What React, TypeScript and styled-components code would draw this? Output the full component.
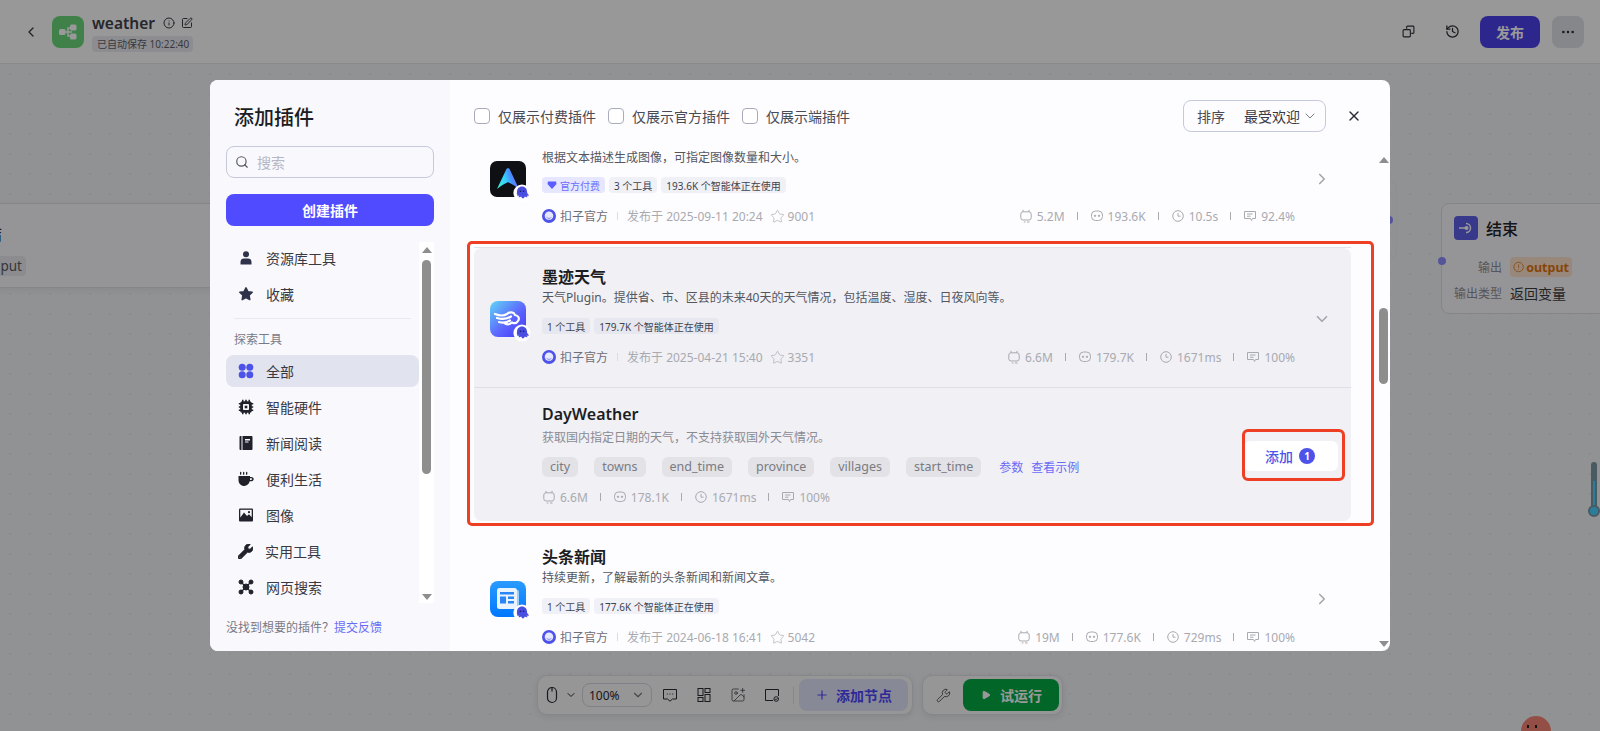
import React from "react";
import styled, { createGlobalStyle } from "styled-components";
import { ChevronLeft, ChevronRight, ChevronDown, Info, SquarePen, History, Ellipsis, Search, X, Star, Plus, Play, Wrench, ImagePlus } from "lucide-react";
import { FaWrench } from "react-icons/fa";

const Global = createGlobalStyle`
  html, body { margin: 0; padding: 0; height: 100%; overflow: hidden; }
  body { font-family: "Noto Sans", "Noto Sans CJK SC", sans-serif; color: #1c1d23; }
  * { box-sizing: border-box; }
`;

const Page = styled.div`
  position: relative; width: 100vw; height: 100vh; overflow: hidden;
  display: flex; flex-direction: column; background: #f2f3f6;
`;
const Header = styled.header`
  height: 64px; flex: none; display: flex; align-items: center; padding: 0 16px 0 23px;
  background: #fdfdfe; border-bottom: 1px solid #e4e5ea; color: #3b3c44;
`;
const BackIcon = styled.span` display: flex; width: 16px; margin-right: 13px; `;
const AppLogo = styled.div`
  width: 32px; height: 32px; border-radius: 8px; background: #6ad87a; flex: none;
  display: flex; align-items: center; justify-content: center;
`;
const AppMeta = styled.div` margin-left: 8px; display: flex; flex-direction: column; padding-top: 3px; `;
const AppNameRow = styled.div` display: flex; align-items: center; gap: 6px; height: 19px; margin-top: -1px; `;
const AppName = styled.span` font-size: 15.5px; font-weight: 600; line-height: 19px; color: #40414a; margin-right: 2px; `;
const SavedTag = styled.span`
  margin-top: 3px; font-size: 10px; line-height: 16px; height: 16px; width: 101px; padding: 0 5px; border-radius: 4px;
  background: #ebecf2; color: #5f6069; white-space: nowrap;
`;
const HeaderSpacer = styled.div` flex: 1; `;
const HeaderIcon = styled.span` display: flex; width: 44px; justify-content: center; color: #2f3038; `;
const Publish = styled.div`
  width: 60px; height: 32px; margin-left: 6px; border-radius: 8px; background: #4b42ec; color: #fff;
  font-size: 14px; font-weight: 700; display: flex; align-items: center; justify-content: center;
`;
const More = styled.div`
  width: 32px; height: 32px; margin-left: 12px; border-radius: 8px; background: #e0e1e8; color: #2f3038;
  display: flex; align-items: center; justify-content: center;
`;

const Canvas = styled.main`
  position: relative; flex: 1;
  background-color: #f2f3f6;
  background-image: radial-gradient(circle, #e8e9ee 1px, transparent 1.2px);
  background-size: 20px 20px;
`;
const LeftNode = styled.div`
  position: absolute; left: -120px; top: 139px; width: 420px; height: 85px; border-radius: 8px;
  background: #f9f9fc; border: 1px solid #dcdde4; box-shadow: 0 2px 6px rgba(0,0,0,.06);
`;
const LeftChar = styled.span` position: absolute; left: 105px; top: 17px; font-size: 16px; `;
const LeftChip = styled.span`
  position: absolute; left: 100px; top: 52px; width: 45px; height: 20px; border-radius: 4px; background: #e9eaf0;
  font-size: 13.5px; line-height: 20px; text-align: right; padding-right: 4px; color: #5a5b63; font-weight: 400;
`;
const BehindNode = styled.div`
  position: absolute; left: 1100px; top: 116px; width: 297px; height: 80px;
  border: 1px solid #eceef2; border-radius: 8px;
`;
const Port = styled.span`
  position: absolute; width: 8px; height: 8px; border-radius: 50%; background: #8e8dff;
`;
const BehindPort = styled(Port)` right: 3px; top: 35px; `;
const EndPort = styled(Port)` left: -4px; top: 53px; `;
const EndNode = styled.div`
  position: absolute; left: 1441px; top: 139px; width: 220px; height: 111px; border-radius: 8px;
  background: #f9f9fc; border: 1px solid #dcdde4; padding: 12px 12px;
`;
const EndHead = styled.div` display: flex; align-items: center; gap: 8px; height: 24px; margin-bottom: 17px; `;
const EndBadge = styled.div`
  width: 24px; height: 24px; border-radius: 4px; background: #5f5fe8; display: flex; align-items: center; justify-content: center;
`;
const EndTitle = styled.span` font-size: 16px; font-weight: 500; color: #24252c; `;
const EndRow = styled.div` display: flex; align-items: center; margin-bottom: 6px; height: 20px; `;
const EndLabel = styled.span` width: 48px; text-align: right; font-size: 12px; color: #8e8f98; margin-right: 8px; white-space: nowrap; `;
const OutputChip = styled.span`
  display: flex; align-items: center; gap: 2px; height: 20px; width: 62px; padding: 0 3px; border-radius: 4px;
  background: #fde3cd; color: #e1740e; font-size: 12.5px; font-weight: 700;
`;
const EndValue = styled.span` font-size: 14px; color: #3a3b42; `;

const Thermo = styled.div` position: absolute; left: 1591px; top: 398px; width: 6px; height: 49px; border-radius: 3px; background: #7b97a6; `;
const ThermoFill = styled.div` position: absolute; left: 2px; top: 19px; bottom: 0; width: 2px; background: #47d2ff; `;
const ThermoBulb = styled.div`
  position: absolute; left: -3px; top: 43px; width: 12px; height: 12px; border-radius: 50%;
  background: #47d2ff; border: 2px solid #7b97a6;
`;
const Tomato = styled.div`
  position: absolute; left: 1521px; top: 652px; width: 30px; height: 30px; border-radius: 50%; background: #f58374;
  &::before, &::after { content: ""; position: absolute; top: 9px; width: 1.5px; height: 3px; background: #222; }
  &::before { left: 6px; } &::after { left: 14px; }
`;

const ToolbarWrap = styled.div`
  position: absolute; left: 0; right: 0; bottom: 16px; display: flex; justify-content: center; gap: 9px;
`;
const ToolGroup = styled.div`
  height: 40px; display: flex; align-items: center; background: #fafafc; border: 1px solid #e0e1e8;
  border-radius: 10px; box-shadow: 0 2px 6px rgba(0,0,0,.08); color: #2a2b33;
`;
const LeftTools = styled(ToolGroup)` width: 376px; padding: 0 4px 0 7px; `;
const RightTools = styled(ToolGroup)` width: 141px; padding-right: 3px; `;
const MouseBtn = styled.div` width: 32px; margin-right: 5px; display: flex; align-items: center; justify-content: space-between; padding-left: 1px; `;
const ZoomSelect = styled.div`
  width: 70px; height: 24px; border: 1px solid #d5d6e0; border-radius: 8px; display: flex; align-items: center;
  justify-content: space-between; padding: 0 6px; font-size: 12px; margin-right: 1px;
`;
const ToolIcon = styled.div` width: 34px; display: flex; justify-content: center; `;
const ToolDivider = styled.div` width: 1px; height: 17px; background: #e0e1e8; margin: 0 5px 0 4px; `;
const AddNode = styled.div`
  width: 109px; height: 32px; border-radius: 8px; background: #e1e4fa; color: #5147ff; font-size: 14px; font-weight: 700;
  display: flex; align-items: center; padding-left: 16px; gap: 7px;
`;
const WrenchBtn = styled.div` width: 40px; display: flex; justify-content: center; `;
const RunBtn = styled.div`
  width: 96px; height: 32px; border-radius: 8px; background: #03ab44; color: #fff; font-size: 14px; font-weight: 700;
  display: flex; align-items: center; padding-left: 18px; gap: 9px;
`;

const Scrim = styled.div`
  position: absolute; inset: 0; background: rgba(0,0,0,.4); display: flex; justify-content: center; align-items: flex-start; padding-top: 80px;
`;
const Modal = styled.div`
  width: 1180px; height: 571px; border-radius: 8px; display: flex; background: #fdfdff; position: relative;
`;

const Sidebar = styled.aside`
  width: 240px; flex: none; padding: 24px 16px 0; background: #f8f8fd; border-radius: 8px 0 0 8px; display: flex; flex-direction: column;
`;
const SideTitle = styled.h2` margin: 0 0 0 8px; font-size: 20px; line-height: 28px; font-weight: 500; color: #1c1d23; `;
const SearchBox = styled.div`
  margin-top: 14px; height: 32px; border: 1px solid #c6c8dc; border-radius: 8px; display: flex; align-items: center;
  padding-left: 8px; gap: 8px; color: #555660;
`;
const Placeholder = styled.span` font-size: 14px; color: #b6b7c4; `;
const CreateBtn = styled.div`
  margin-top: 16px; height: 32px; border-radius: 8px; background: #514bff; color: #fff; font-size: 14px; font-weight: 700;
  display: flex; align-items: center; justify-content: center;
`;
const MenuArea = styled.div` margin-top: 16px; height: 361px; display: flex; `;
const MenuList = styled.nav` width: 193px; display: flex; flex-direction: column; gap: 4px; overflow: hidden; `;
const MenuItem = styled.div<{ $active?: boolean }>`
  height: 32px; flex: none; display: flex; align-items: center; gap: 12px; padding-left: 12px; border-radius: 8px;
  font-size: 14px; color: #383943; background: ${p => (p.$active ? "#e1e3ee" : "transparent")};
`;
const MenuDivider = styled.div` height: 1px; background: #e8e8f0; margin: 4px 8px 0; flex: none; `;
const MenuLabel = styled.div` font-size: 12px; line-height: 16px; color: #797a86; margin: 9px 0 3px 8px; flex: none; `;
const SideScroll = styled.div`
  width: 15px; background: #fff; display: flex; flex-direction: column; align-items: center; padding: 5px 0 3px;
`;
const Arrow = styled.div<{ $down?: boolean }>`
  width: 0; height: 0; flex: none; border-left: 5px solid transparent; border-right: 5px solid transparent;
  ${p => (p.$down ? "border-top: 6px solid #8e8e8e;" : "border-bottom: 6px solid #8e8e8e;")}
`;
const SideThumb = styled.div` width: 9px; height: 214px; margin-top: 7px; border-radius: 5px; background: #8e8e8e; flex: none; `;
const ScrollGap = styled.div` flex: 1; `;
const Feedback = styled.div` margin-top: 17px; font-size: 12px; line-height: 16px; color: #797a86; white-space: nowrap; `;
const LinkText = styled.span` color: #6a6cf5; `;

const Main = styled.section` flex: 1; min-width: 0; display: flex; flex-direction: column; `;
const TopBar = styled.div` height: 70px; flex: none; display: flex; align-items: center; padding: 1px 0 0 24px; `;
const CheckItem = styled.label` display: flex; align-items: center; gap: 8px; font-size: 14px; color: #4a4b55; margin-right: 12px; white-space: nowrap; `;
const CheckBox = styled.span` width: 16px; height: 16px; border: 1px solid #a9abbc; border-radius: 4px; background: #fff; flex: none; `;
const SortBox = styled.div`
  margin-left: auto; width: 143px; height: 32px; border: 1px solid #c6c8dc; border-radius: 8px; display: flex; align-items: center;
  font-size: 14px; color: #4a4b55; padding-left: 13px;
`;
const SortValue = styled.span` margin-left: 19px; color: #383943; white-space: nowrap; `;
const SortChevron = styled.span` display: flex; margin-left: 2px; color: #555660; `;
const CloseBtn = styled.span` display: flex; margin: 0 28px 0 20px; color: #2a2b33; `;
const Body = styled.div` flex: 1; min-height: 0; display: flex; `;
const ListClip = styled.div` width: 928px; flex: none; overflow: hidden; padding-left: 24px; `;
const ListInner = styled.div` width: 877px; margin-top: -42px; display: flex; flex-direction: column; padding-top: 7px; `;

const Row = styled.article<{ $sep?: boolean }>`
  height: 139px; flex: none; display: flex; align-items: center; padding: 0 0 0 16px; position: relative;
  ${p => (p.$sep ? "border-bottom: 1px solid #e3e4ea; height: 140px; margin-top: -7px;" : "")}
`;
const LogoBox = styled.div` width: 36px; height: 36px; position: relative; flex: none; margin: 2px 16px 0 0; `;
const LogoBadge = styled.span` position: absolute; right: -5px; bottom: -5px; width: 18px; height: 18px; display: flex; `;
const RowBody = styled.div` flex: 1; min-width: 0; align-self: flex-start; display: flex; flex-direction: column; margin: 18px 56px 0 0; `;
const Title = styled.h3`
  margin: 0; font-size: 16px; line-height: 22px; height: 22px; font-weight: 600; color: #1c1d23;
`;
const Desc = styled.p<{ $muted?: boolean }>`
  margin: 2px 0 0; font-size: 12px; line-height: 16px; color: ${p => (p.$muted ? "#8a8b93" : "#55565e")}; white-space: nowrap;
`;
const Tags = styled.div<{ $tight?: boolean }>` display: flex; gap: 4px; margin-top: ${p => (p.$tight ? 11 : 12)}px; height: 16px; `;
const Tag = styled.span<{ $official?: boolean }>`
  display: flex; align-items: center; gap: 3px; height: 16px; padding: 0 5px; border-radius: 4px; font-size: 10px; white-space: nowrap;
  background: ${p => (p.$official ? "#e6e6ff" : "#f0f0f7")}; color: ${p => (p.$official ? "#6a6cff" : "#41424c")};
`;
const CardTag = styled(Tag)` background: #e7e7ef; `;
const Meta = styled.div` margin-top: 15px; height: 16px; display: flex; align-items: center; font-size: 12px; color: #a9aab0; white-space: nowrap; `;
const Avatar = styled.span` display: flex; width: 14px; height: 14px; margin-right: 4px; `;
const Author = styled.span` color: #6d6e76; `;
const VSep = styled.span` width: 1px; height: 8px; background: #dcdce2; margin: 0 9px; `;
const StarWrap = styled.span` display: flex; margin: 0 3px 0 7px; `;
const Stats = styled.div` margin-left: auto; display: flex; align-items: center; `;
const ToolStats = styled(Stats)` margin-left: 0; `;
const Stat = styled.span` display: flex; align-items: center; gap: 4px; `;
const StatSep = styled.span` width: 1px; height: 8px; background: #a9aab0; margin: 0 12px; `;
const RowChevron = styled.span` position: absolute; right: 20px; top: 50%; margin-top: -8px; display: flex; color: #a5a6ad; `;

const Expanded = styled.div`
  position: relative; margin-bottom: 7px; background: #f0f0f5; border-radius: 8px; flex: none;
`;
const ExpandedHead = styled(Row)` border-bottom: 1px solid #dfe0e6; height: 140px; `;
const RedFrame = styled.div`
  position: absolute; left: -7px; top: -7px; right: -23px; bottom: -5px; border: 3px solid #ee3f24; border-radius: 5px; pointer-events: none;
`;
const ToolRow = styled.div` display: flex; align-items: center; justify-content: space-between; padding: 15px 13px 16px 68px; `;
const ToolInfo = styled.div` display: flex; flex-direction: column; `;
const ToolTitle = styled(Title)``;
const ToolDesc = styled(Desc)` margin-top: 5px; `;
const Params = styled.div` display: flex; align-items: center; gap: 16px; margin-top: 11px; height: 20px; `;
const Param = styled.span`
  height: 20px; padding: 0 8px; border-radius: 6px; background: #e2e2e7; color: #7a7b82; font-size: 12.5px; line-height: 20px;
`;
const ParamLinks = styled.span` display: flex; gap: 8px; margin-left: 2px; font-size: 12px; color: #6a6cf5; `;
const ToolMeta = styled(Meta)` margin-top: 12px; `;
const AddBtn = styled.div`
  position: relative; width: 94px; height: 30px; border-radius: 6px; background: #fff; display: flex; align-items: center;
  padding-left: 21px; gap: 6px; color: #4d53e8; font-size: 14px; font-weight: 500; margin-top: 4px;
`;
const CountBadge = styled.span`
  width: 16px; height: 16px; border-radius: 50%; background: #4d53e8; color: #fff; font-size: 10px; font-weight: 700;
  display: flex; align-items: center; justify-content: center;
`;
const RedButtonFrame = styled.div`
  position: absolute; left: -2px; top: -12px; right: -7px; bottom: -10px; border: 3px solid #ee3f24; border-radius: 6px; pointer-events: none;
`;
const ListScroll = styled.div` width: 11px; margin-right: 2px; flex: none; display: flex; flex-direction: column; align-items: center; padding: 7px 0 4px; `;
const ListThumb = styled.div` width: 9px; height: 76px; margin-top: 145px; border-radius: 5px; background: #8e8e8e; flex: none; `;

const BotBadge = () => (
  <LogoBadge>
    <svg width="18" height="18" viewBox="0 0 18 18" aria-hidden>
      <circle cx="9" cy="9" r="8.6" fill="#fff" />
      <path d="M9 2.400c3.200 0 5 2.300 5 5.200 0 1.200.5 2.300 1.600 3.200.5.400.2 1-.4 1-.7 0-1.100-.1-1.500-.3.2.7.6 1.200 1 1.600-.9.4-2.100.1-2.900-.6-.3.9-1 1.700-1.800 2-.8-.3-1.500-1.100-1.800-2-.8.7-2 1-2.900.6.4-.4.8-.9 1-1.600-.4.2-.8.3-1.500.3-.6 0-.9-.6-.4-1C3.500 9.900 4 8.800 4 7.600c0-2.900 1.800-5.200 5-5.200z" fill="#4a4ee0" />
      <circle cx="7.400" cy="7.200" r=".8" fill="#171a5a" />
      <circle cx="10.600" cy="7.200" r=".8" fill="#171a5a" />
    </svg>
  </LogoBadge>
);

const ArtLogo = () => (
  <svg width="36" height="36" viewBox="0 0 36 36" aria-hidden>
    <defs>
      <linearGradient id="artA" x1="0" y1="0.8" x2="1" y2="0.5">
        <stop offset="0" stopColor="#3cf2d4" /><stop offset=".4" stopColor="#35d0ff" /><stop offset=".7" stopColor="#4a8cff" /><stop offset="1" stopColor="#8a5cff" />
      </linearGradient>
    </defs>
    <rect width="36" height="36" rx="7" fill="#0f1013" />
    <path d="M7 28 16.200 8.500c.7-1.700 2.900-1.700 3.600 0L29 28c-3.500-2.800-6.800-5-10.400-6.500-.4-.2-.8-.2-1.200 0C13.800 23 10.500 25.200 7 28z" fill="url(#artA)" />
  </svg>
);
const WeatherLogo = () => (
  <svg width="36" height="36" viewBox="0 0 36 36" aria-hidden>
    <defs>
      <linearGradient id="wxA" x1="0" y1="0" x2="1" y2="1">
        <stop offset="0" stopColor="#5fd6f5" /><stop offset=".55" stopColor="#5d66ff" /><stop offset="1" stopColor="#4036f0" />
      </linearGradient>
    </defs>
    <rect width="36" height="36" rx="8" fill="url(#wxA)" />
    <path d="M5 13c5 2 9 2 12 0 3-2.500 7-2 8 1 3 .5 5 3 3 6-1.500 2.500-4 2.500-6 1.500-2 2-5 2-7 1" stroke="#fff" strokeWidth="2.200" fill="none" strokeLinecap="round" />
    <path d="M7 17c5 1.500 10 1 14-1.500M9 21c4 1 8 .5 11-1.500" stroke="#fff" strokeWidth="2.200" fill="none" strokeLinecap="round" />
  </svg>
);
const NewsLogo = () => (
  <svg width="36" height="36" viewBox="0 0 36 36" aria-hidden>
    <defs>
      <linearGradient id="nwA" x1="0" y1="0" x2="0" y2="1">
        <stop offset="0" stopColor="#2a9bff" /><stop offset="1" stopColor="#0077ff" />
      </linearGradient>
    </defs>
    <rect width="36" height="36" rx="8" fill="url(#nwA)" />
    <rect x="24" y="9" width="5" height="19" rx="1.500" fill="#9ccdff" />
    <rect x="7" y="7" width="20" height="21" rx="2.500" fill="#e9f4ff" />
    <rect x="10" y="11" width="14" height="2.500" fill="#2a86f5" />
    <rect x="10" y="15.500" width="6" height="7" fill="#2a86f5" />
    <rect x="18" y="15.500" width="6" height="2.500" fill="#2a86f5" />
    <rect x="18" y="20" width="6" height="2.500" fill="#2a86f5" />
  </svg>
);

const CozeAvatar = () => (
  <Avatar>
    <svg width="14" height="14" viewBox="0 0 14 14" aria-hidden>
      <circle cx="7" cy="7" r="7" fill="#4d53e8" />
      <circle cx="7" cy="6.800" r="4.300" fill="#e6e8ff" />
      <path d="M3.600 7.400 7 9l3.400-1.600L7 11z" fill="#9a9ef2" />
    </svg>
  </Avatar>
);

const PlugIcon = () => (
  <svg width="14" height="14" viewBox="0 0 14 14" fill="none" stroke="currentColor" strokeWidth="1" aria-hidden>
    <path d="M4 .8v2M10 .8v2" />
    <rect x="1.800" y="2.800" width="10.400" height="8.200" rx="2.200" />
    <path d="M4.800 13h1.600M8 13h2.500" />
  </svg>
);
const BotIcon = () => (
  <svg width="14" height="14" viewBox="0 0 14 14" fill="none" stroke="currentColor" strokeWidth="1" aria-hidden>
    <rect x="1.500" y="2" width="11" height="9.500" rx="4" /><circle cx="5" cy="6.800" r=".7" fill="currentColor" /><circle cx="9" cy="6.800" r=".7" fill="currentColor" />
  </svg>
);
const ClockIcon = () => (
  <svg width="14" height="14" viewBox="0 0 14 14" fill="none" stroke="currentColor" strokeWidth="1" aria-hidden>
    <circle cx="7" cy="7" r="5.300" /><path d="M7 4v3.200h2.500" />
  </svg>
);
const NoteIcon = () => (
  <svg width="14" height="14" viewBox="0 0 14 14" fill="none" stroke="currentColor" strokeWidth="1" aria-hidden>
    <path d="M1.500 2.500h11v7H9.500l-1 2-1-2h-6z" /><path d="M4 5h5.500M4 7.200h3.500" />
  </svg>
);

const Ico = { w: 16 };
const PersonIcon = () => (
  <svg width={Ico.w} height={Ico.w} viewBox="0 0 16 16" fill="#2f3349" aria-hidden>
    <circle cx="8" cy="4.200" r="3" /><path d="M2.500 14.500V12a3.600 3.600 0 0 1 3.600-3.400h3.800a3.600 3.600 0 0 1 3.600 3.400v2.500z" />
  </svg>
);
const StarFill = () => (
  <svg width={Ico.w} height={Ico.w} viewBox="0 0 16 16" fill="#2f3349" stroke="#2f3349" strokeWidth="1.500" strokeLinejoin="round" aria-hidden>
    <path d="M8 1.800l1.900 3.900 4.300.6-3.100 3 .7 4.300L8 11.600l-3.800 2 .7-4.300-3.100-3 4.300-.6z" />
  </svg>
);
const AllIcon = () => (
  <svg width={Ico.w} height={Ico.w} viewBox="0 0 16 16" fill="#4d53e8" aria-hidden>
    <circle cx="4.200" cy="4.200" r="3.500" /><circle cx="11.800" cy="4.200" r="3.500" /><circle cx="4.200" cy="11.800" r="3.500" /><circle cx="11.800" cy="11.800" r="3.500" />
  </svg>
);
const ChipIcon = () => (
  <svg width={Ico.w} height={Ico.w} viewBox="0 0 16 16" aria-hidden>
    <path d="M4 .8h1.500v1.400h1.700V.8h1.600v1.400h1.700V.8H12v1.400c1 .3 1.600.9 1.800 1.800h1.400v1.500h-1.400v1.700h1.400v1.600h-1.400v1.700h1.400V12h-1.400c-.2 1-.8 1.600-1.800 1.800v1.400h-1.500v-1.400H8.800v1.400H7.200v-1.400H5.500v1.400H4v-1.400C3 13.600 2.400 13 2.200 12H.8v-1.500h1.400V8.800H.8V7.200h1.400V5.500H.8V4h1.400c.2-.9.800-1.500 1.800-1.800z" fill="#20212a" />
    <rect x="5" y="5" width="6" height="6" rx=".8" fill="#f8f8fd" /><rect x="6.700" y="6.700" width="2.600" height="2.600" fill="#20212a" />
  </svg>
);
const BookIcon = () => (
  <svg width={Ico.w} height={Ico.w} viewBox="0 0 16 16" aria-hidden>
    <rect x="1.500" y="1" width="13" height="14" rx="1" fill="#20212a" />
    <rect x="3.500" y="1" width="1" height="14" fill="#f8f8fd" />
    <rect x="7" y="4" width="5" height="1.500" fill="#f8f8fd" /><rect x="7" y="6.500" width="3.500" height="1" fill="#f8f8fd" />
  </svg>
);
const CupIcon = () => (
  <svg width={Ico.w} height={Ico.w} viewBox="0 0 16 16" fill="#20212a" aria-hidden>
    <rect x="2" y=".8" width="1.300" height="3" rx=".6" /><rect x="5" y=".8" width="1.300" height="3" rx=".6" /><rect x="8" y=".8" width="1.300" height="3" rx=".6" />
    <path d="M.5 5h11.500v.9h1.200c1.600 0 2.500 1 2.500 2.100 0 1.400-1.200 2.300-2.700 2.300h-1.300C11 13 9 15 6.300 15 3 15 .5 12.500.5 9z" />
    <path d="M12 7.300v1.600h1.100c.6 0 1.100-.3 1.100-.8s-.5-.8-1.100-.8z" fill="#f8f8fd" />
  </svg>
);
const PictureIcon = () => (
  <svg width={Ico.w} height={Ico.w} viewBox="0 0 16 16" aria-hidden>
    <rect x="1" y="1.500" width="14" height="13" rx="1" fill="#20212a" />
    <rect x="2.300" y="2.800" width="11.400" height="7.700" fill="#f8f8fd" />
    <path d="M2 11l4-5.500 3 3.500 2-1.700 3 3.200v1.500H2z" fill="#20212a" /><circle cx="11" cy="5.200" r="1.100" fill="#20212a" />
  </svg>
);
const WebIcon = () => (
  <svg width={Ico.w} height={Ico.w} viewBox="0 0 16 16" fill="#20212a" stroke="#20212a" aria-hidden>
    <path d="M3 3l10 10M13 3 3 13" strokeWidth="1.300" />
    <circle cx="3" cy="3" r="2" /><circle cx="13" cy="3" r="2" /><circle cx="3" cy="13" r="2" /><circle cx="13" cy="13" r="2" /><circle cx="8" cy="8" r="3" />
  </svg>
);

const Stars = ({ n }: { n: string }) => (
  <>
    <StarWrap><Star size={15} strokeWidth={1.100} /></StarWrap>
    <span>{n}</span>
  </>
);
const StatLine = ({ a, b, c, d }: { a: string; b: string; c: string; d: string }) => (
  <>
    <Stat><PlugIcon />{a}</Stat><StatSep />
    <Stat><BotIcon />{b}</Stat><StatSep />
    <Stat><ClockIcon />{c}</Stat><StatSep />
    <Stat><NoteIcon />{d}</Stat>
  </>
);
const MetaLine = (p: { date: string; star: string; a: string; b: string; c: string; d: string }) => (
  <Meta>
    <CozeAvatar /><Author>扣子官方</Author><VSep />
    <span>发布于 {p.date}</span>
    <Stars n={p.star} />
    <Stats><StatLine a={p.a} b={p.b} c={p.c} d={p.d} /></Stats>
  </Meta>
);

const menuTop = [
  { icon: <PersonIcon />, label: "资源库工具" },
  { icon: <StarFill />, label: "收藏" },
];
const menuExplore = [
  { icon: <ChipIcon />, label: "智能硬件" },
  { icon: <BookIcon />, label: "新闻阅读" },
  { icon: <CupIcon />, label: "便利生活" },
  { icon: <PictureIcon />, label: "图像" },
  { icon: <FaWrench size={15} color="#20212a" stroke="#20212a" strokeWidth={30} />, label: "实用工具" },
  { icon: <WebIcon />, label: "网页搜索" },
];
const params = ["city", "towns", "end_time", "province", "villages", "start_time"];

export default function App() {
  return (
    <Page>
      <Global />
      <Header>
        <BackIcon><ChevronLeft size={16} /></BackIcon>
        <AppLogo>
          <svg width="18" height="16" viewBox="0 0 18 16" aria-hidden>
            <path d="M5 8h8M9 8V4h4M9 8v4h4" stroke="#fff" strokeWidth="1.500" fill="none" />
            <rect x="0" y="5" width="6.500" height="6" rx="1.500" fill="#fff" />
            <rect x="11" y="0.500" width="6.500" height="6" rx="1.500" fill="#fff" />
            <rect x="11" y="9.500" width="6.500" height="6" rx="1.500" fill="#fff" />
          </svg>
        </AppLogo>
        <AppMeta>
          <AppNameRow>
            <AppName>weather</AppName>
            <Info size={12} />
            <SquarePen size={12} />
          </AppNameRow>
          <SavedTag>已自动保存 10:22:40</SavedTag>
        </AppMeta>
        <HeaderSpacer />
        <HeaderIcon>
          <svg width="13" height="13" viewBox="0 0 14 14" fill="none" stroke="currentColor" strokeWidth="1.200" aria-hidden>
            <path d="M5 4V2.200c0-.6.400-1 1-1h5.800c.6 0 1 .4 1 1V8c0 .6-.4 1-1 1H10" />
            <path d="M9 10V6c0-.6-.4-1-1-1H2.200c-.6 0-1 .4-1 1v5.800c0 .6.400 1 1 1H8c.6 0 1-.4 1-1V10z" />
          </svg>
        </HeaderIcon>
        <HeaderIcon><History size={15} /></HeaderIcon>
        <Publish>发布</Publish>
        <More><Ellipsis size={16} /></More>
      </Header>
      <Canvas>
        <LeftNode>
          <LeftChar>结</LeftChar>
          <LeftChip>put</LeftChip>
        </LeftNode>
        <BehindNode><BehindPort /></BehindNode>
        <EndNode>
          <EndPort />
          <EndHead>
            <EndBadge>
              <svg width="16" height="16" viewBox="0 0 16 16" fill="none" stroke="#fff" strokeWidth="1.500" aria-hidden>
                <path d="M1 8h8" /><path d="M8 3.500a4.500 4.500 0 1 1 0 9" /><circle cx="8.500" cy="8" r="1.300" fill="#fff" />
              </svg>
            </EndBadge>
            <EndTitle>结束</EndTitle>
          </EndHead>
          <EndRow>
            <EndLabel>输出</EndLabel>
            <OutputChip>
              <svg width="14" height="14" viewBox="0 0 13 13" fill="none" stroke="#e1740e" strokeWidth=".9" aria-hidden>
                <circle cx="6.500" cy="6.500" r="5.500" /><path d="M6.500 3.500v4M6.500 8.800v.8" />
              </svg>
              output
            </OutputChip>
          </EndRow>
          <EndRow>
            <EndLabel>输出类型</EndLabel>
            <EndValue>返回变量</EndValue>
          </EndRow>
        </EndNode>
        <Thermo><ThermoFill /><ThermoBulb /></Thermo>
        <Tomato />
        <ToolbarWrap>
          <LeftTools>
            <MouseBtn>
              <svg width="12" height="18" viewBox="0 0 12 18" fill="none" stroke="currentColor" strokeWidth="1.200" aria-hidden>
                <rect x="1.500" y="1.500" width="9" height="15" rx="4.500" /><path d="M6 1.500v4" />
              </svg>
              <ChevronDown size={12} />
            </MouseBtn>
            <ZoomSelect>100%<ChevronDown size={14} color="#777" /></ZoomSelect>
            <ToolIcon>
              <svg width="16" height="16" viewBox="0 0 16 16" fill="none" stroke="currentColor" strokeWidth="1" aria-hidden>
                <path d="M1.500 2.500h13v9.500h-4L8 14.200 5.500 12h-4z" /><path d="M4.800 7h1M7.500 7h1M10.200 7h1" />
              </svg>
            </ToolIcon>
            <ToolIcon>
              <svg width="16" height="16" viewBox="0 0 16 16" fill="none" stroke="currentColor" strokeWidth="1" aria-hidden>
                <rect x="2" y="1.500" width="5" height="7" /><rect x="9" y="1.500" width="5" height="4" /><rect x="2" y="10.500" width="5" height="4" /><rect x="9" y="7.500" width="5" height="7" />
              </svg>
            </ToolIcon>
            <ToolIcon><ImagePlus size={16} strokeWidth={1} /></ToolIcon>
            <ToolIcon>
              <svg width="16" height="16" viewBox="0 0 16 16" fill="none" stroke="currentColor" strokeWidth="1" aria-hidden>
                <path d="M9 13.500H1.500v-11h13V9" /><circle cx="12.200" cy="12" r="2.300" /><path d="M11.200 12l.8.8 1.300-1.500" />
              </svg>
            </ToolIcon>
            <ToolDivider />
            <AddNode><Plus size={14} />添加节点</AddNode>
          </LeftTools>
          <RightTools>
            <WrenchBtn><Wrench size={15} strokeWidth={1.200} /></WrenchBtn>
            <RunBtn><Play size={10} fill="#fff" />试运行</RunBtn>
          </RightTools>
        </ToolbarWrap>
      </Canvas>
      <Scrim>
        <Modal>
          <Sidebar>
            <SideTitle>添加插件</SideTitle>
            <SearchBox><Search size={14} /><Placeholder>搜索</Placeholder></SearchBox>
            <CreateBtn>创建插件</CreateBtn>
            <MenuArea>
              <MenuList>
                {menuTop.map(m => <MenuItem key={m.label}>{m.icon}{m.label}</MenuItem>)}
                <MenuDivider />
                <MenuLabel>探索工具</MenuLabel>
                <MenuItem $active><AllIcon />全部</MenuItem>
                {menuExplore.map(m => <MenuItem key={m.label}>{m.icon}{m.label}</MenuItem>)}
              </MenuList>
              <SideScroll>
                <Arrow />
                <SideThumb />
                <ScrollGap />
                <Arrow $down />
              </SideScroll>
            </MenuArea>
            <Feedback>没找到想要的插件？<LinkText>提交反馈</LinkText></Feedback>
          </Sidebar>
          <Main>
            <TopBar>
              <CheckItem><CheckBox />仅展示付费插件</CheckItem>
              <CheckItem><CheckBox />仅展示官方插件</CheckItem>
              <CheckItem><CheckBox />仅展示端插件</CheckItem>
              <SortBox>排序<SortValue>最受欢迎</SortValue><SortChevron><ChevronDown size={16} strokeWidth={1.200} /></SortChevron></SortBox>
              <CloseBtn><X size={16} /></CloseBtn>
            </TopBar>
            <Body>
              <ListClip>
                <ListInner>
                  <Row $sep>
                    <LogoBox><ArtLogo /><BotBadge /></LogoBox>
                    <RowBody>
                      <Title />
                      <Desc>根据文本描述生成图像，可指定图像数量和大小。</Desc>
                      <Tags $tight>
                        <Tag $official>
                          <svg width="10" height="10" viewBox="0 0 10 10" aria-hidden><path d="M1 1.500h8l.5 2.500L5 9 .5 4z" fill="#5a5cff" /></svg>
                          官方付费
                        </Tag>
                        <Tag>3 个工具</Tag>
                        <Tag>193.6K 个智能体正在使用</Tag>
                      </Tags>
                      <MetaLine date="2025-09-11 20:24" star="9001" a="5.2M" b="193.6K" c="10.5s" d="92.4%" />
                    </RowBody>
                    <RowChevron><ChevronRight size={18} strokeWidth={2.200} /></RowChevron>
                  </Row>
                  <Expanded>
                    <RedFrame />
                    <ExpandedHead>
                      <LogoBox><WeatherLogo /><BotBadge /></LogoBox>
                      <RowBody>
                        <Title>墨迹天气</Title>
                        <Desc>天气Plugin。提供省、市、区县的未来40天的天气情况，包括温度、湿度、日夜风向等。</Desc>
                        <Tags>
                          <CardTag>1 个工具</CardTag>
                          <CardTag>179.7K 个智能体正在使用</CardTag>
                        </Tags>
                        <MetaLine date="2025-04-21 15:40" star="3351" a="6.6M" b="179.7K" c="1671ms" d="100%" />
                      </RowBody>
                      <RowChevron><ChevronDown size={18} strokeWidth={2.200} /></RowChevron>
                    </ExpandedHead>
                    <ToolRow>
                      <ToolInfo>
                        <ToolTitle>DayWeather</ToolTitle>
                        <ToolDesc $muted>获取国内指定日期的天气，不支持获取国外天气情况。</ToolDesc>
                        <Params>
                          {params.map(p => <Param key={p}>{p}</Param>)}
                          <ParamLinks><span>参数</span><span>查看示例</span></ParamLinks>
                        </Params>
                        <ToolMeta>
                          <ToolStats><StatLine a="6.6M" b="178.1K" c="1671ms" d="100%" /></ToolStats>
                        </ToolMeta>
                      </ToolInfo>
                      <AddBtn>
                        添加<CountBadge>1</CountBadge>
                        <RedButtonFrame />
                      </AddBtn>
                    </ToolRow>
                  </Expanded>
                  <Row>
                    <LogoBox><NewsLogo /><BotBadge /></LogoBox>
                    <RowBody>
                      <Title>头条新闻</Title>
                      <Desc>持续更新，了解最新的头条新闻和新闻文章。</Desc>
                      <Tags>
                        <Tag>1 个工具</Tag>
                        <Tag>177.6K 个智能体正在使用</Tag>
                      </Tags>
                      <MetaLine date="2024-06-18 16:41" star="5042" a="19M" b="177.6K" c="729ms" d="100%" />
                    </RowBody>
                    <RowChevron><ChevronRight size={18} strokeWidth={2.200} /></RowChevron>
                  </Row>
                </ListInner>
              </ListClip>
              <ListScroll>
                <Arrow />
                <ListThumb />
                <ScrollGap />
                <Arrow $down />
              </ListScroll>
            </Body>
          </Main>
        </Modal>
      </Scrim>
    </Page>
  );
}
